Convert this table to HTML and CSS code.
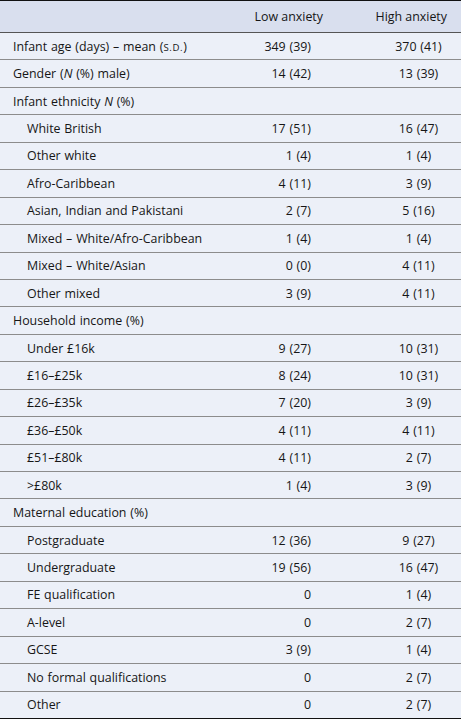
FILE: index.html
```html
<!DOCTYPE html>
<html>
<head>
<meta charset="utf-8">
<link rel="stylesheet" href="styles.css">
</head>
<body>
<div class="table">
  <div class="head">
    <div></div>
    <div class="hc">Low anxiety</div>
    <div class="hc hc2">High anxiety</div>
  </div>
  <div class="row"><div class="l">Infant age (days) – mean (<span class="sc">S.D.</span>)</div><div class="a">349 (39)</div><div class="b">370 (41)</div></div>
  <div class="row"><div class="l">Gender (<i>N</i> (%) male)</div><div class="a">14 (42)</div><div class="b">13 (39)</div></div>
  <div class="row"><div class="l">Infant ethnicity <i>N</i> (%)</div><div></div><div></div></div>
  <div class="row"><div class="l in">White British</div><div class="a">17 (51)</div><div class="b">16 (47)</div></div>
  <div class="row"><div class="l in">Other white</div><div class="a">1 (4)</div><div class="b">1 (4)</div></div>
  <div class="row"><div class="l in">Afro-Caribbean</div><div class="a">4 (11)</div><div class="b">3 (9)</div></div>
  <div class="row"><div class="l in">Asian, Indian and Pakistani</div><div class="a">2 (7)</div><div class="b">5 (16)</div></div>
  <div class="row"><div class="l in">Mixed – White/Afro-Caribbean</div><div class="a">1 (4)</div><div class="b">1 (4)</div></div>
  <div class="row"><div class="l in">Mixed – White/Asian</div><div class="a">0 (0)</div><div class="b">4 (11)</div></div>
  <div class="row"><div class="l in">Other mixed</div><div class="a">3 (9)</div><div class="b">4 (11)</div></div>
  <div class="row"><div class="l">Household income (%)</div><div></div><div></div></div>
  <div class="row"><div class="l in">Under £16k</div><div class="a">9 (27)</div><div class="b">10 (31)</div></div>
  <div class="row"><div class="l in">£16–£25k</div><div class="a">8 (24)</div><div class="b">10 (31)</div></div>
  <div class="row"><div class="l in">£26–£35k</div><div class="a">7 (20)</div><div class="b">3 (9)</div></div>
  <div class="row"><div class="l in">£36–£50k</div><div class="a">4 (11)</div><div class="b">4 (11)</div></div>
  <div class="row"><div class="l in">£51–£80k</div><div class="a">4 (11)</div><div class="b">2 (7)</div></div>
  <div class="row"><div class="l in">&gt;£80k</div><div class="a">1 (4)</div><div class="b">3 (9)</div></div>
  <div class="row"><div class="l">Maternal education (%)</div><div></div><div></div></div>
  <div class="row"><div class="l in">Postgraduate</div><div class="a">12 (36)</div><div class="b">9 (27)</div></div>
  <div class="row"><div class="l in">Undergraduate</div><div class="a">19 (56)</div><div class="b">16 (47)</div></div>
  <div class="row"><div class="l in">FE qualification</div><div class="a">0</div><div class="b">1 (4)</div></div>
  <div class="row"><div class="l in">A-level</div><div class="a">0</div><div class="b">2 (7)</div></div>
  <div class="row"><div class="l in">GCSE</div><div class="a">3 (9)</div><div class="b">1 (4)</div></div>
  <div class="row"><div class="l in">No formal qualifications</div><div class="a">0</div><div class="b">2 (7)</div></div>
  <div class="row last"><div class="l in">Other</div><div class="a">0</div><div class="b">2 (7)</div></div>
</div>
</body>
</html>
```
FILE: styles.css
```css
html, body {
  margin: 0;
  padding: 0;
  background: #ecf0f8;
}
.table {
  width: 461px;
  font-family: "Open Sans", "Noto Sans", sans-serif;
  font-size: 12.4px;
  word-spacing: 0.6px;
  color: #161616;
  background: #ecf0f8;
}
.head {
  display: grid;
  grid-template-columns: 236px 100px 125px;
  height: 33px;
  box-sizing: border-box;
  border-top: 1px solid #111;
  border-bottom: 1px solid #555;
  background: #d9dfee;
  align-items: center;
}
.hc {
  text-align: right;
  padding-right: 13px;
  word-spacing: 0;
}
.hc2 {
  padding-right: 14px;
}
.row {
  display: grid;
  grid-template-columns: 236px 100px 125px;
  height: 27.44px;
  box-sizing: border-box;
  border-bottom: 1px solid #8c8c8c;
  align-items: center;
}
.row.last {
  border-bottom: 1px solid #111;
}
.l {
  padding-left: 13px;
  white-space: nowrap;
}
.l.in {
  padding-left: 27px;
}
.a {
  text-align: right;
  padding-right: 25px;
}
.b {
  text-align: center;
  padding-left: 40px;
}
.sc {
  font-size: 9.6px;
  letter-spacing: 0.6px;
}
```
